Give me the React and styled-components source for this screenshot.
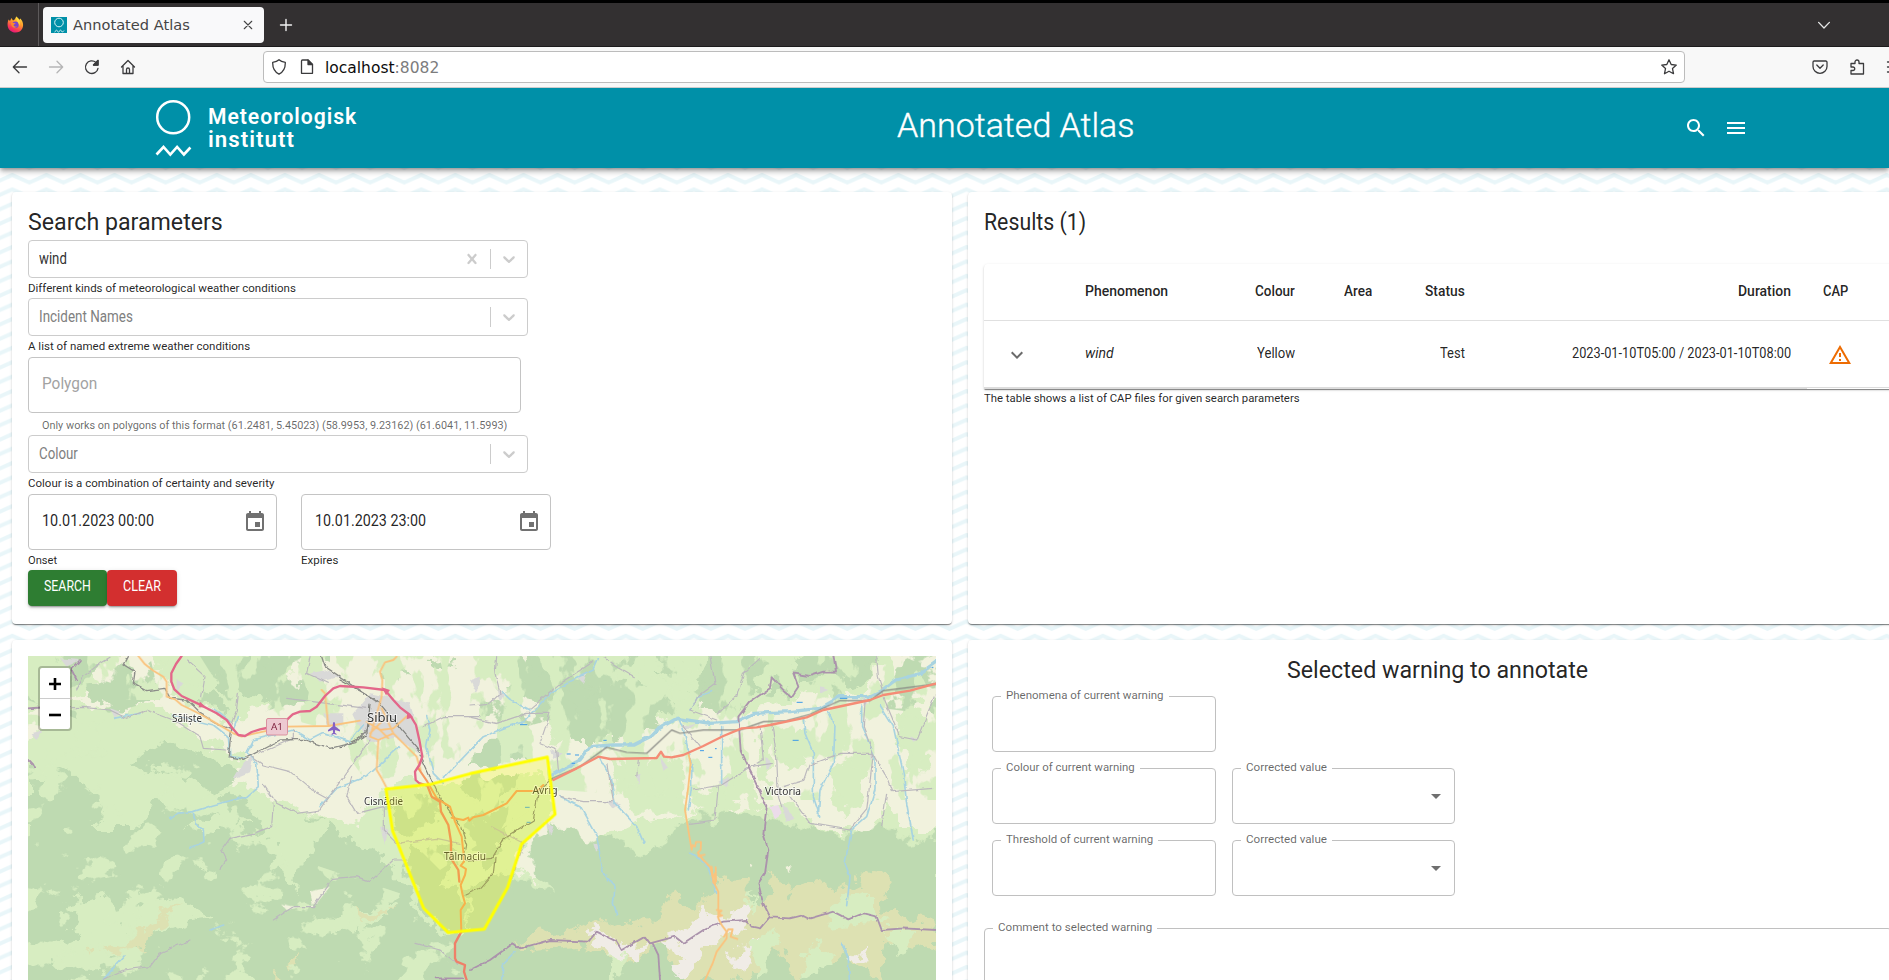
import React, { useLayoutEffect, useRef, useState } from "react";
import styled, { createGlobalStyle, css } from "styled-components";

const GlobalStyle = createGlobalStyle`
  * { box-sizing: border-box; }
  html, body { margin: 0; padding: 0; overflow: hidden; background: #fff; }
  body { font-family: Roboto, "Liberation Sans", sans-serif; color: rgba(0, 0, 0, 0.87); }
`;

/* ---------- text set to a fixed measure ---------- */
const Measure = styled.span`
  display: inline-block;
  flex: none;
  width: ${(p) => p.$w}px;
  text-align: left;
  white-space: nowrap;
`;
const Glyphs = styled.span`
  display: inline-block;
  transform-origin: 0 50%;
  white-space: pre;
`;
function Fit({ w, children }) {
  const ref = useRef(null);
  const [scale, setScale] = useState(1);
  useLayoutEffect(() => {
    setScale(w / ref.current.offsetWidth);
  }, [w]);
  return (
    <Measure $w={w}>
      <Glyphs ref={ref} style={{ transform: `scaleX(${scale})` }}>{children}</Glyphs>
    </Measure>
  );
}

/* ---------- browser window ---------- */
const Window = styled.div`
  width: 1889px;
  height: 980px;
  overflow: hidden;
  display: flex;
  flex-direction: column;
`;
const TabStrip = styled.div`
  height: 47px;
  flex: none;
  border-top: 3px solid #000;
  border-bottom: 1px solid #1c1b1c;
  background: #333031;
  display: flex;
  align-items: center;
`;
const PinnedTab = styled.div`
  width: 39px;
  height: 43px;
  padding-left: 7px;
  border-right: 1px solid #5d5a5b;
  display: flex;
  align-items: center;
`;
const Tab = styled.div`
  width: 221px;
  height: 36px;
  margin-left: 4px;
  padding: 0 10px 0 8px;
  border-radius: 4px;
  background: #f9f9fa;
  display: flex;
  align-items: center;
  font: 14.6px "DejaVu Sans", sans-serif;
  color: #454545;
  gap: 6px;
`;
const Grow = styled.div`
  flex: 1;
`;
const NewTab = styled.div`
  margin-left: 14px;
  display: flex;
`;
const TabsMenu = styled.div`
  width: 71px;
  display: flex;
`;
const NavBar = styled.div`
  height: 41px;
  flex: none;
  background: #f8f8f8;
  border-bottom: 1px solid #ccc;
  display: flex;
  align-items: center;
`;
const NavButtons = styled.div`
  width: 263px;
  flex: none;
  padding-left: 12px;
  display: flex;
  gap: 20px;
`;
const UrlBar = styled.div`
  width: 1422px;
  height: 32px;
  flex: none;
  border: 1px solid #bcbcbc;
  border-radius: 4px;
  background: #fff;
  display: flex;
  align-items: center;
  padding: 0 7px;
  gap: 12px;
  font: 15.5px "DejaVu Sans", sans-serif;
  color: #0c0c0d;
`;
const Address = styled.div`
  display: flex;
  margin-left: -2px;
  padding-top: 1px;
`;
const Port = styled.span`
  color: #7c7c7d;
`;
const NavTools = styled.div`
  margin-left: 127px;
  display: flex;
  gap: 21px;
  flex: none;
`;

/* ---------- page ---------- */
const Page = styled.div`
  position: relative;
  isolation: isolate;
  flex: 1;
  min-height: 0;
  overflow: hidden;
`;
const Waves = styled.svg`
  position: absolute;
  inset: 0;
  z-index: -1;
`;
const Header = styled.header`
  position: relative;
  z-index: 2;
  height: 80px;
  background: #0090a8;
  color: #fff;
  padding-left: 155px;
  box-shadow: 0 2px 4px -1px rgba(0, 0, 0, 0.3), 0 4px 5px rgba(0, 0, 0, 0.16), 0 1px 10px rgba(0, 0, 0, 0.12);
  display: flex;
`;
const Brand = styled.div`
  width: 742px;
  display: flex;
  gap: 16px;
`;
const BrandName = styled.div`
  padding-top: 18px;
  font-size: 22px;
  font-weight: 600;
  line-height: 22.8px;
  letter-spacing: 1px;
  display: flex;
  flex-direction: column;
`;
const AppTitle = styled.h1`
  margin: 0;
  width: 787px;
  padding-top: 15.5px;
  font-size: 34px;
  line-height: 42px;
  font-weight: 300;
  -webkit-text-stroke: 0.35px #fff;
`;
const HeaderTools = styled.div`
  padding-top: 28px;
  display: flex;
  gap: 16px;
`;
const Panels = styled.main`
  display: grid;
  grid-template-columns: 940px 940px;
  grid-template-rows: 432px 520px;
  gap: 16px;
  padding: 24px 12px;
  width: 1920px;
`;
const Panel = styled.section`
  background: #fff;
  border-radius: 4px;
  padding: 16px;
  box-shadow: 0 2px 1px -1px rgba(0, 0, 0, 0.3), 0 1px 1px rgba(0, 0, 0, 0.2), 0 1px 3px rgba(0, 0, 0, 0.14);
`;
const Heading = styled.h2`
  margin: 0;
  font-size: 24px;
  font-weight: 400;
  line-height: 28px;
  height: 32px;
  ${(p) => p.$center && css`text-align: center; padding-right: 2px; height: 40px;`}
`;
const Hint = styled.div`
  height: ${(p) => p.$h || 20}px;
  line-height: ${(p) => p.$line || 20}px;
  font-size: 11.5px;
  padding-left: ${(p) => p.$indent || 0}px;
  color: ${(p) => (p.$muted ? "rgba(0,0,0,0.6)" : "rgba(0,0,0,0.87)")};
`;
const Select = styled.div`
  width: 500px;
  height: 38px;
  border: 1px solid #ccc;
  border-radius: 4px;
  padding: 0 8px 2px 10px;
  font-size: 16px;
  color: ${(p) => (p.$empty ? "#808080" : "#333")};
  display: flex;
  align-items: center;
`;
const SelectTools = styled.div`
  margin-left: auto;
  padding-top: 2px;
  display: flex;
  align-items: center;
`;
const Separator = styled.i`
  width: 1px;
  height: 20px;
  background: #ccc;
  margin: 0 8px 0 8px;
`;
const Input = styled.div`
  width: ${(p) => p.$w}px;
  height: 56px;
  border: 1px solid #c4c4c4;
  border-radius: 4px;
  padding: 0 9px 4px 13px;
  font-size: 16.5px;
  color: ${(p) => (p.$empty ? "#a2a2a2" : "rgba(0,0,0,0.87)")};
  display: flex;
  align-items: center;
  justify-content: space-between;
`;
const IconDrop = styled.span`
  display: flex;
  padding-top: ${(p) => p.$top ?? 4}px;
`;
const Dates = styled.div`
  display: flex;
  gap: 24px;
`;
const Buttons = styled.div`
  display: flex;
`;
const Button = styled.button`
  border: 0;
  height: 36px;
  width: ${(p) => p.$w}px;
  padding: 0 0 5px;
  border-radius: 4px;
  background: ${(p) => p.$bg};
  color: #fff;
  font: 400 15.5px Roboto, sans-serif;
  box-shadow: 0 3px 1px -2px rgba(0, 0, 0, 0.2), 0 2px 2px rgba(0, 0, 0, 0.14), 0 1px 5px rgba(0, 0, 0, 0.12);
`;

/* ---------- results table ---------- */
const TableCard = styled.div`
  margin-top: 24px;
  width: 924px;
  height: 125px;
  border-radius: 4px 4px 0 0;
  box-shadow: 0 2px 1px -1px rgba(0, 0, 0, 0.3), 0 1px 1px rgba(0, 0, 0, 0.2), 0 1px 3px rgba(0, 0, 0, 0.14);
`;
const Row = styled.div`
  display: grid;
  grid-template-columns: 101px 84.5px 125px 77px 93px 326px 66px;
  align-items: center;
  height: ${(p) => (p.$head ? 57 : 67)}px;
  padding-bottom: ${(p) => (p.$head ? 1 : 3)}px;
  border-bottom: ${(p) => (p.$head ? "1px solid #e0e0e0" : "0")};
  font-size: 14.5px;
  font-weight: ${(p) => (p.$head ? 500 : 400)};
`;
const RowEnd = styled.div`
  height: 2px;
  margin-top: -1px;
  border-top: 1px solid #dcdcdc;
`;
const RowEndFill = styled.div`
  height: 1px;
  width: 823px;
  background: #dcdcdc;
`;
const Cell = styled.div`
  text-align: ${(p) => (p.$left ? "left" : "right")};
  padding-left: ${(p) => p.$pad || 0}px;
  font-style: ${(p) => (p.$italic ? "italic" : "normal")};
`;

/* ---------- annotation form ---------- */
const Form = styled.div`
  display: grid;
  grid-template-columns: 224px 223px;
  gap: 16px;
  padding-left: 8px;
`;
const Outlined = styled.div`
  position: relative;
  height: ${(p) => p.$h || 56}px;
  margin-top: ${(p) => p.$top || 0}px;
  grid-column: ${(p) => p.$col || "auto"};
  border: 1px solid #c0c0c0;
  border-radius: 4px;
  display: flex;
  align-items: center;
  justify-content: flex-end;
  padding-right: 6px;
`;
const Label = styled.label`
  position: absolute;
  left: 8px;
  top: -12px;
  padding: 0 5px;
  background: #fff;
  font-size: 11.5px;
  line-height: 20px;
  color: rgba(0, 0, 0, 0.6);
`;

/* ---------- map ---------- */
const MapFrame = styled.div`
  position: relative;
  width: 908px;
  height: 324px;
  overflow: hidden;
  background: #d8eec3;
`;
const ZoomControl = styled.div`
  position: absolute;
  left: 10px;
  top: 10px;
  width: 34px;
  border: 2px solid rgba(0, 0, 0, 0.22);
  border-radius: 4px;
  background: #fff;
  background-clip: padding-box;
`;
const ZoomButton = styled.div`
  height: ${(p) => (p.$first ? 31 : 30)}px;
  border-bottom: ${(p) => (p.$first ? "1px solid #ccc" : "0")};
  display: flex;
  align-items: center;
  justify-content: center;
  padding-top: 2px;
`;

/* ---------- icons ---------- */
const Chevron = () => (
  <svg width="20" height="20" viewBox="0 0 20 20" fill="#ccc">
    <path d="M4.516 7.548c0.436-0.446 1.043-0.481 1.576 0l3.908 3.747 3.908-3.747c0.533-0.481 1.141-0.446 1.574 0 0.436 0.445 0.408 1.197 0 1.615-0.406 0.418-4.695 4.502-4.695 4.502-0.217 0.223-0.502 0.335-0.787 0.335s-0.57-0.112-0.789-0.335c0 0-4.287-4.084-4.695-4.502s-0.436-1.17 0-1.615z" />
  </svg>
);
const Cross = () => (
  <svg width="20" height="20" viewBox="0 0 20 20" fill="#ccc">
    <path d="M14.348 14.849c-0.469 0.469-1.229 0.469-1.697 0l-2.651-3.030-2.651 3.029c-0.469 0.469-1.229 0.469-1.697 0-0.469-0.469-0.469-1.229 0-1.697l2.758-3.15-2.759-3.152c-0.469-0.469-0.469-1.228 0-1.697s1.228-0.469 1.697 0l2.652 3.031 2.651-3.031c0.469-0.469 1.228-0.469 1.697 0s0.469 1.229 0 1.697l-2.758 3.152 2.758 3.15c0.469 0.469 0.469 1.229 0 1.698z" />
  </svg>
);
const Mui = ({ d, fill = "currentColor" }) => (
  <svg width="24" height="24" viewBox="0 0 24 24" fill={fill}><path d={d} /></svg>
);
const CALENDAR = "M17 12h-5v5h5v-5zM16 1v2H8V1H6v2H5c-1.11 0-1.99.9-1.99 2L3 19c0 1.1.89 2 2 2h14c1.1 0 2-.9 2-2V5c0-1.1-.9-2-2-2h-1V1h-2zm3 18H5V8h14v11z";
const SEARCH = "M15.5 14h-.79l-.28-.27C15.41 12.59 16 11.11 16 9.5 16 5.91 13.09 3 9.5 3S3 5.91 3 9.5 5.91 16 9.5 16c1.61 0 3.09-.59 4.23-1.57l.27.28v.79l5 4.99L20.49 19l-4.99-5zm-6 0C7.01 14 5 11.99 5 9.5S7.01 5 9.5 5 14 7.01 14 9.5 11.99 14 9.5 14z";
const MENU = "M3 18h18v-2H3v2zm0-5h18v-2H3v2zm0-7v2h18V6H3z";
const WARNING = "M12 5.99L19.53 19H4.47L12 5.99M12 2L1 21h22L12 2zm1 14h-2v2h2v-2zm0-6h-2v4h2v-4z";
const ARROW_DOWN = "M7.41 8.59 12 13.17l4.59-4.58L18 10l-6 6-6-6 1.41-1.41z";
const DROP = "M7 10l5 5 5-5z";

const Line = ({ d, size = 16, color = "#3b3b3d", width = 1.3, children }) => (
  <svg width={size} height={size} viewBox="0 0 16 16" fill="none" stroke={color} strokeWidth={width} strokeLinecap="round" strokeLinejoin="round">
    <path d={d} />{children}
  </svg>
);
const Firefox = () => (
  <svg width="17" height="17" viewBox="0 0 17 17">
    <defs>
      <linearGradient id="fx" x1=".8" y1="0" x2=".3" y2="1">
        <stop offset="0" stopColor="#ffe141" /><stop offset=".4" stopColor="#ff9a2b" />
        <stop offset=".75" stopColor="#fb3c55" /><stop offset="1" stopColor="#e2127f" />
      </linearGradient>
    </defs>
    <path d="M1.600 3.500 3 5 4.400 2 6 4.400C7.500 4 8.300 3 9.200.6c1 1.500 2 2.200 3.300 3.200L13.400 2.600C16 5.500 17 9.500 15.300 12.600 13.700 15.600 11.200 16.600 8.500 16.600 4.300 16.600.8 13.600.6 9.300.5 7 .8 5.200 1.600 3.500z" fill="url(#fx)" />
    <circle cx="8.500" cy="8.800" r="3.200" fill="#7a45cf" />
    <path d="M3.800 7c2-.7 3.200.3 5 .1-.3 1-1.700 1.200-2.300 1.900.5 1.600 2 2 3.600 1.300-1.600 2.300-5.600 2-6.300-3.300z" fill="#ff8a2b" />
    <path d="M9.200.6c3.600 2.400 4.600 6 3 9.400C12.500 6.500 8.600 5.500 9.200.6z" fill="#ffd83c" />
  </svg>
);
const Favicon = () => (
  <svg width="16" height="16" viewBox="0 0 16 16">
    <rect width="16" height="16" fill="#0090a8" />
    <g fill="none" stroke="#d8f2f6" strokeWidth="1"><circle cx="8" cy="5.500" r="4.300" /><path d="M3.500 15l2-1.800 2 1.800 2-1.800 2 1.800 1.500-1.500" /></g>
  </svg>
);
const Logo = () => (
  <svg width="37" height="80" viewBox="155 88 37 80" fill="none" stroke="#fff">
    <circle cx="173.200" cy="117.200" r="16" strokeWidth="2.500" />
    <path d="M156.500 154.500l7-7.500 6.800 7.500 6.800-7.500 6.800 7.500 6.500-7" strokeWidth="2.600" />
  </svg>
);

/* ---------- terrain map drawing ---------- */
const A = "translate(0 630) scale(.33333)";
const B = "translate(470 630) scale(.33333)";
const C = "translate(340 655) scale(.33333)";
const Zone = ({ t, fill, d }) => <g transform={t}><path d={d} fill={fill} /></g>;
const CREAM = "#f1f2dd";
const WOOD = "#bedab1";
const MEADOW = "#d7edc1";
const ROCK = "#dde1b2";
const TOWN = "#d9d9d8";
const BARE = "#f0ece6";

const Terrain = () => (
  <svg width="908" height="324" viewBox="28 656 908 324" display="block">
    <defs>
      <filter id="rough" x="-5%" y="-5%" width="110%" height="110%" colorInterpolationFilters="sRGB">
        <feTurbulence type="fractalNoise" baseFrequency=".06" numOctaves="4" seed="4" result="n" />
        <feDisplacementMap in="SourceGraphic" in2="n" scale="27" xChannelSelector="R" yChannelSelector="G" />
      </filter>
      <filter id="wobble" x="-5%" y="-5%" width="110%" height="110%" colorInterpolationFilters="sRGB">
        <feTurbulence type="fractalNoise" baseFrequency=".1" numOctaves="3" seed="9" result="n" />
        <feDisplacementMap in="SourceGraphic" in2="n" scale="4" xChannelSelector="R" yChannelSelector="G" />
      </filter>
      <filter id="meadows" x="0" y="0" width="100%" height="100%" colorInterpolationFilters="sRGB">
        <feTurbulence type="fractalNoise" baseFrequency=".028 .034" numOctaves="5" seed="12" />
        <feColorMatrix values="0 0 0 0 .843  0 0 0 0 .929  0 0 0 0 .757  28 0 0 0 -16.600" result="m" />
        <feComposite in="m" in2="SourceAlpha" operator="in" />
      </filter>
      <filter id="woods" x="0" y="0" width="100%" height="100%" colorInterpolationFilters="sRGB">
        <feTurbulence type="fractalNoise" baseFrequency=".03" numOctaves="5" seed="21" />
        <feColorMatrix values="0 0 0 0 .745  0 0 0 0 .855  0 0 0 0 .694  28 0 0 0 -14.400" result="m" />
        <feComposite in="m" in2="SourceAlpha" operator="in" />
      </filter>
      <filter id="fields" x="0" y="0" width="100%" height="100%" colorInterpolationFilters="sRGB">
        <feTurbulence type="fractalNoise" baseFrequency=".04 .025" numOctaves="4" seed="33" />
        <feColorMatrix values="0 0 0 0 .843  0 0 0 0 .929  0 0 0 0 .757  24 0 0 0 -12.600" result="m" />
        <feComposite in="m" in2="SourceAlpha" operator="in" />
      </filter>
    </defs>

    <rect x="28" y="656" width="908" height="324" fill={MEADOW} />

    <g filter="url(#rough)">
      <Zone t={A} fill={CREAM} d="M240 60L420 60 500 130 520 200 660 260 700 280 860 190 870 90 960 60 1500 60 1500 440 1300 470 1220 440 1150 480 1070 590 960 560 830 510 760 470 690 470 740 400 600 320 480 230 330 240 200 220 84 340 84 260 190 210 300 160Z" />
      <Zone t={B} fill={CREAM} d="M0 60L400 60 320 160 230 240 250 340 340 300 440 330 600 260 700 200 800 250 1000 200 1180 190 1260 60 1420 60 1420 600 1300 600 1260 520 1200 610 1140 600 1060 600 980 540 860 520 640 560 500 580 420 600 380 660 300 640 200 760 130 720 160 640 250 550 230 430 60 430 0 370Z" />
      <Zone t={A} fill={WOOD} d="M84 410L190 370 280 300 430 310 560 360 690 400 720 440 660 490 740 500 790 600 700 650 850 640 940 560 1080 650 1160 690 1270 860 1340 920 1500 900 1500 1100 60 1100 60 640 84 600Z" />
      <Zone t={A} fill={WOOD} d="M260 170L420 150 480 200 420 230 300 220ZM640 80L840 80 860 160 960 150 940 240 790 210 660 170ZM590 200L660 180 690 240 620 230ZM1170 90L1240 120 1200 150 1150 130ZM1290 80L1360 90 1340 130 1290 110Z" />
      <Zone t={B} fill={WOOD} d="M170 60L370 60 360 130 490 150 620 220 540 290 440 330 330 330 250 290 250 220 170 210 100 180ZM0 380L130 290 190 330 180 380 0 420ZM560 100L640 90 620 150ZM740 60L820 60 870 160 800 240 740 240 660 200 700 120ZM1090 60L1220 60 1210 140 1140 170 1080 130 980 160 960 200 880 190 900 140Z" />
      <Zone t={B} fill={WOOD} d="M-20 900L50 870 130 740 250 800 170 650 260 570 360 650 420 620 520 680 620 600 700 560 760 530 860 550 940 590 1060 600 1150 610 1240 580 1320 640 1420 600 1420 1100 -20 1100Z" />
      <Zone t={B} fill={MEADOW} d="M420 400L560 400 640 380 640 560 560 540 500 560 450 500ZM670 480L750 470 790 420 850 430 880 530 800 500 740 570 670 540ZM860 330L900 300 910 480 870 440ZM1100 380L1180 390 1170 520 1120 560 1080 520ZM1290 200L1350 200 1380 420 1320 420 1280 300ZM950 300L1000 300 1010 400 950 440Z" />
      <Zone t={C} fill={WOOD} d="M150 450L230 400 300 440 290 490 200 540 160 530ZM370 380L540 350 520 410 440 450 360 400ZM380 500L490 440 520 490 480 590 430 640 390 580ZM210 580L330 560 340 620 300 680 360 700 380 830 320 830 240 740 190 620ZM440 650L520 640 500 720 430 820 380 800 380 700Z" />
      <Zone t={A} fill={MEADOW} d="M110 380L260 280 480 270 520 310 380 400 600 460 680 500 590 540 450 520 420 600 270 600 330 540 200 420 120 450ZM200 820L330 800 370 900 400 770 420 830 550 800 640 860 500 880 400 960 300 1010 180 1020 110 960 240 900ZM560 590L640 550 760 580 700 600ZM840 560L990 580 960 640 900 700 890 790 830 700ZM940 910L1060 840 1200 820 1120 880 1000 910Z" />
      <Zone t={A} fill={ROCK} d="M250 965L340 950 430 900 470 860 560 820 480 880 430 960 340 980ZM1050 830L1110 850 1200 830 1100 870ZM865 990L900 965 880 1010ZM820 1010L850 1060 820 1060Z" />
      <Zone t={B} fill={ROCK} d="M130 940L180 910 330 900 380 870 440 890 560 870 600 790 660 850 740 760 830 730 830 800 880 830 910 730 960 790 1050 740 1110 790 1200 730 1270 740 1230 840 1400 880 1400 960 1240 920 1230 1060 1120 960 980 1060 930 950 820 1060 640 1060 580 930 480 1000 340 950 200 960Z" />
      <Zone t={B} fill={MEADOW} d="M1070 830L1200 770 1200 830 1260 880 1080 890ZM840 960L900 900 930 940 870 1040ZM1000 980L1060 920 1080 1000 1010 1050ZM400 960L470 970 460 1040 420 1050ZM1240 900L1340 900 1300 980ZM820 830L860 790 850 860Z" />
      <Zone t={B} fill={BARE} d="M350 930L380 880 460 960 530 930 500 990 440 980ZM560 930L680 890 690 830 740 850 780 860 820 820 840 890 700 950 640 1040 590 1040 640 970ZM790 960L850 950 830 1020 790 1030ZM1130 1000L1200 940 1190 980Z" />
    </g>

    <path d="M28 690L160 745 260 800 300 860 420 900 480 980 28 980Z" filter="url(#meadows)" />
    <path d="M480 656H936V715L740 690 620 700 480 740Z" filter="url(#woods)" />
    <path d="M200 656H330V690L240 720ZM28 656H150L160 700 80 720 28 700Z" filter="url(#woods)" />
    <path d="M28 656H936V800L700 800 560 790 440 870 400 830 330 730 220 700 28 700Z" filter="url(#fields)" />

    <g filter="url(#wobble)">
      <Zone t={A} fill={TOWN} d="M1060 250L1110 190 1160 200 1230 220 1250 290 1260 370 1180 320 1110 340 1080 290ZM930 130L980 120 1020 140 960 155ZM970 250L1030 250 1030 290 980 285ZM730 400L760 375 750 430 700 450ZM1140 590L1165 600 1155 645ZM95 310L130 300 110 330ZM330 235L360 245 345 265ZM530 150L550 160 530 185ZM180 85L240 90 200 110Z" />
      <Zone t={B} fill={TOWN} d="M80 180L105 190 90 215ZM240 360L275 370 250 390ZM320 140L350 130 340 160ZM500 430L515 430 505 465ZM570 380L595 415 580 425ZM640 290L680 280 650 300ZM745 455L780 440 770 475ZM885 380L910 400 890 420ZM935 520L975 560 950 580ZM1205 360L1220 380 1200 390ZM1180 200L1195 215 1180 225ZM1320 320L1350 325 1330 335ZM410 510L450 520 430 535ZM370 640L390 650 375 665ZM230 570L250 590 240 620ZM0 150L30 140 20 190ZM1050 170L1075 180 1050 190Z" />
      <Zone t={A} fill={CREAM} d="M840 820L880 830 940 830 930 785 990 770 950 820 860 840Z" />
      <Zone t={B} fill={CREAM} d="M950 710L965 705 955 730ZM840 700L850 705 845 715Z" />
      <Zone t={B} fill="#ecdcea" d="M900 530L925 525 935 550 915 565Z" />
    </g>

    <g fill="none" strokeLinejoin="round" strokeLinecap="round" filter="url(#wobble)">
      <g transform={A} stroke="#a8d3e0" strokeWidth="5">
        <path d="M510 565L530 550 580 545 640 525 740 500 775 470 770 400 750 375 740 370 760 330 800 320 880 300 930 330 970 310 1050 335 1090 285M580 545L585 580 610 600 612 635 570 655M735 385L690 380 685 320 640 285 520 255M1280 260L1290 300 1280 350 1300 430 1330 460M1440 330L1330 445M960 530L1010 475 1100 440 1200 350M310 1048L375 975M630 900L668 885M340 265L420 250M700 300L712 260M640 235L690 275" />
      </g>
      <g transform={B} stroke="#a8d3e0" strokeWidth="5">
        <path d="M385 85L370 120 290 160 240 190 160 275 100 295 40 320 0 360M95 185L120 208 180 240M625 262L640 300 665 400 665 470 655 540M1000 265L1005 310 1030 370 1030 500 1050 560M1075 245L1095 290 1090 400 1050 480 1045 555M1175 225L1175 290 1215 380 1215 480 1190 560 1145 600 1125 700 1140 740 1130 830M1230 225L1270 290 1300 430 1310 520 1330 630M390 385L420 440 435 520 500 590 522 640M270 500L330 530 380 620 400 730 435 770 430 820 440 855M660 670L710 700 740 790M755 290L755 460M660 240L680 200 725 185M1115 940L1135 985 1138 1050M135 965L100 1000 95 1050" />
        <path d="M250 435L330 390 360 350 430 345 490 345 540 320 560 300 620 265 720 280 800 275 850 250 960 245 1050 235 1110 200 1200 200 1240 180 1280 150 1350 130 1400 95" strokeWidth="10" />
      </g>
      <g transform={A} stroke="#bbb8bd" strokeWidth="3.500">
        <path d="M85 235L250 232 330 240 380 265 440 240 520 270 600 320 610 355 680 360M330 82L300 100 250 140 230 180M560 90L615 140 605 200M715 190L710 240 690 290M755 380L790 405 870 425 930 475 985 505M790 460L830 520 890 550 960 540 1080 370 1110 330M820 520L815 590 760 610 690 625 665 660 680 690 660 718M1055 440L1040 500 1070 550 1150 530M1150 530L1150 600 1190 640 1310 625 1380 640M820 870L880 830 940 830 1000 745 1070 740 1110 755 1180 690 1220 690M310 1048L370 1020 450 1010 480 970 570 930M930 80L920 130 985 160M860 205L1100 235M1270 290L1330 260 1440 260M1245 940L1320 960 1370 1000M880 300L880 325 780 370" />
      </g>
      <g transform={B} stroke="#bbb8bd" strokeWidth="3.500">
        <path d="M80 80L75 130 90 190 60 220 0 225M0 262L80 280 170 250 240 250 210 340 260 360 265 420M370 95L270 160 180 235M400 80L430 105 490 140M720 80L735 160 680 200 660 240 740 270M870 85L820 130 800 200 740 250M640 290L690 350M270 500L340 515 430 515 410 400M505 390L500 440M670 480L755 465 840 410 910 400M660 580L735 570 745 470M840 410L880 390 870 285M905 280L920 380 925 500 935 530M940 470L1005 450 1020 405 1110 370 1210 370 1245 430 1265 485 1390 475M960 500L1020 580 1140 600 1190 540 1210 370 1180 290 1185 215M1235 590L1250 490M1240 200L1290 320 1340 330 1395 195M1220 80L1225 140 1240 190M65 590L160 640 130 720" />
      </g>
      <g transform={C} stroke="#7f807c" strokeWidth="3.500">
        <path d="M240 300L300 430 360 510 380 570 370 620 455 610 490 550 580 495 595 410 640 370M375 720L420 700 460 655 465 610M0 278L80 240 90 150M0 75L110 135 240 290" />
      </g>
      <g transform={A} stroke="#8c8d89" strokeWidth="4">
        <path d="M385 80L372 105 405 125 400 160 440 182 495 175 510 205 560 210 600 250 650 280 695 295 685 380 730 388 840 330 910 328 990 355 1070 335 1100 300M965 80L975 110 1050 160 1130 215" />
      </g>
      <g stroke="#ab93ac" strokeWidth="5.500">
        <path transform={B} d="M1090 78L1098 125 1060 125 1020 138 970 130 985 170 965 200 940 180 905 142 900 175 840 215 805 260 812 360 850 440 890 530 880 610 895 660 885 730 865 760 880 820 900 860 870 895 845 890 830 870 760 875 730 885 700 900 640 940 615 920 540 940 525 920 455 960 440 935 380 905 355 935 240 930 150 955 130 940 60 990 0 1020M900 862L960 865 1000 855 1020 865 1090 845 1135 868 1180 850 1220 860 1235 900 1300 895 1400 900M548 940L565 975 570 1050" />
        <path transform={A} d="M84 235L125 232M240 90L215 120 230 150M84 390L103 410" />
        <path transform={C} d="M290 970L370 970" />
      </g>
    </g>

    <g fill="none" strokeLinejoin="round" strokeLinecap="round">
      <path transform={B} stroke="#858682" strokeWidth="3.500" d="M235 450L330 410 410 352 470 367 530 370 605 300 630 310 700 300 810 300 880 275 950 272 1020 253 1110 212 1200 212 1240 182 1400 162" />
      <g stroke="#fac37e" strokeWidth="5.500">
        <path transform={A} d="M415 78L435 103 460 122 490 140 500 155 500 200 525 208 545 225 600 252 640 275 700 310 725 320 765 310 860 290 985 288 1080 272M985 288L980 240 975 190 965 180M1190 80L1180 90 1155 97 1140 125 1147 150 1145 200 1125 270 1110 320 1135 330 1130 420 1145 445 1158 470M1145 235L1180 310 1250 380 1262 420M1100 275L1140 300 1180 295 1225 255M1135 330L1180 310M1110 310L1150 270M1130 290L1165 325" />
        <path transform={B} d="M655 370L662 400 655 470 645 540 665 660 668 645 675 650 678 636 693 636 692 660 683 668 700 690 722 712 728 745 735 730 735 765 745 785 745 865 755 885 770 905 770 925 740 965 728 1000 705 1050M685 678L704 674M725 710L730 760 738 755 737 712M740 840L755 842 745 850 757 857 743 860M762 920L775 898 788 898 782 920 802 927" />
      </g>
      <path transform={C} stroke="#f59a62" strokeWidth="6" d="M235 340L262 380 290 430 330 455 345 500 365 545 370 590 372 620 362 632 378 642 375 660 362 690 368 720 375 745 362 765 364 830M335 488L370 495 385 488 388 497 400 487 430 480 500 445 530 408 590 408 610 390" />
      <g stroke="#ee8069" strokeWidth="7">
        <path transform={C} d="M240 385L262 392 275 425 300 440 303 470 325 510 333 560 333 610 355 645 358 680M364 830L345 865 345 910 350 920 375 930 372 950 380 975" />
        <path transform={B} d="M250 450L320 415 385 380 420 387 560 384 573 365 582 380 605 382 640 375 700 348 760 318 815 295 860 292 900 285 1010 262 1060 240 1200 210 1240 195 1320 182 1400 160" stroke="#f58c76" />
      </g>
      <path transform={A} stroke="#e3678a" strokeWidth="7" d="M545 78L528 102 514 130 514 155 523 178 545 198 600 224 650 250 680 270 700 298 715 315 735 318 755 306 780 298 800 294M862 268L878 253 900 245 930 243 950 230 975 198 1000 175 1020 168 1090 172 1155 180 1180 210 1200 232 1230 255 1248 285 1258 330 1267 380 1258 405 1245 425 1247 450 1260 462" />
      <path transform={A} fill="#e3678a" d="M1145 172L1170 180 1158 196ZM1222 245L1240 262 1220 268ZM600 215L618 232 596 232Z" />
    </g>

    <path transform={B} d="M290 372h12M305 400h10M315 375h12M400 331h10M150 284h22M968 331h18M1110 205h22M980 217h18M690 362h12M715 382h12M735 356h5M165 532h14M170 577h12M1385 112h5" stroke="#3d9be8" strokeWidth="3" />

    <g fontFamily='"Noto Sans", "Open Sans", sans-serif' fill="#333" stroke="#fff" strokeOpacity=".65" strokeWidth="2" paintOrder="stroke" fontSize="10.500">
      <text x="172" y="722" textLength="30" lengthAdjust="spacingAndGlyphs">Săliște</text>
      <text x="367" y="721.500" fontSize="13.300" textLength="30" lengthAdjust="spacingAndGlyphs">Sibiu</text>
      <text x="364" y="804.500" textLength="39" lengthAdjust="spacingAndGlyphs">Cisnădie</text>
      <text x="444" y="859.500" textLength="42" lengthAdjust="spacingAndGlyphs">Tălmaciu</text>
      <text x="532.500" y="794" textLength="25" lengthAdjust="spacingAndGlyphs">Avrig</text>
      <text x="765" y="794.500" textLength="36" lengthAdjust="spacingAndGlyphs">Victoria</text>
    </g>
    <rect x="266.500" y="718.500" width="21" height="16.500" rx="1.500" fill="#edc9d1" stroke="#d9919f" />
    <text x="271" y="730.300" fontFamily='"Noto Sans", sans-serif' fontSize="9.500" fill="#7c1f3c" textLength="12" lengthAdjust="spacingAndGlyphs">A1</text>
    <path transform="translate(334 728.500)" d="M0-6.500C1-6.500 1.200-5 1.200-2.200L6 1.500V3L1.200 1.500.9 4.200 2.600 5.500V6.300L0 5.500-2.600 6.300V5.500L-.9 4.200-1.200 1.500-6 3V1.500L-1.200-2.200C-1.200-5-1-6.500 0-6.500z" fill="#8461c4" />

    <path transform={C} d="M138 402L275 387 390 356 622 306 645 478 545 567 503 697 433 822 325 833 251 760 158 528Z" fill="#ff0" fillOpacity=".23" stroke="#ff0" strokeWidth="9" strokeLinejoin="round" />
  </svg>
);

function Picker({ text, w, clearable, empty }) {
  return (
    <Select $empty={empty}>
      <Fit w={w}>{text}</Fit>
      <SelectTools>
        {clearable && <Cross />}
        <Separator />
        <Chevron />
      </SelectTools>
    </Select>
  );
}
function Field({ label, w, col, select, h, top }) {
  return (
    <Outlined $col={col} $h={h} $top={top}>
      <Label><Fit w={w}>{label}</Fit></Label>
      {select && <Mui d={DROP} fill="#6f6f6f" />}
    </Outlined>
  );
}

function BrowserChrome() {
  return (
    <>
      <TabStrip>
        <PinnedTab><Firefox /></PinnedTab>
        <Tab>
          <Favicon />
          <Fit w={117}>Annotated Atlas</Fit>
          <Grow />
          <Line size={12} d="M3 3l10 10M13 3L3 13" color="#444" width={1.5} />
        </Tab>
        <NewTab><Line d="M8 2.500v11M2.500 8h11" color="#f2f2f2" width={1.4} /></NewTab>
        <Grow />
        <TabsMenu><Line size={12} d="M.8 4.500L8 12l7.200-7.500" color="#e8e8e8" width={1.7} /></TabsMenu>
      </TabStrip>
      <NavBar>
        <NavButtons>
          <Line d="M14.500 8h-13M7 2.300L1.300 8 7 13.700" />
          <Line d="M1.500 8h13M9 2.300L14.700 8 9 13.700" color="#b5b5b6" />
          <Line d="M14 9.300A6.300 6.300 0 1 1 12 3.500M14 1.500V6H9.500z">
            <path d="M14 1.500V6H9.500z" fill="#3b3b3d" />
          </Line>
          <Line d="M1.500 8L8 1.500 14.500 8M3 7v7.500h10V7M6.500 14.500V10.500a1.500 1.500 0 0 1 3 0v4" />
        </NavButtons>
        <UrlBar>
          <Line d="M8 .8C9.500 2.300 11.500 3 14.300 3.300 14.500 9 12.500 13 8 15.200 3.500 13 1.500 9 1.700 3.300 4.500 3 6.500 2.300 8 .8z" />
          <Line d="M3.500 1h5.500l4.500 4.500V14.300H2.500V2a1 1 0 0 1 1-1z">
            <path d="M9 1v4.500h4.500z" fill="#3b3b3d" />
          </Line>
          <Address>
            <Fit w={114}>localhost<Port>:8082</Port></Fit>
          </Address>
          <Grow />
          <Line d="M8 .8l2.200 4.700 5.100.6-3.800 3.500 1 5.100L8 12.200l-4.500 2.500 1-5.100L.7 6.100l5.100-.6z" />
        </UrlBar>
        <NavTools>
          <Line d="M2.200 2h11.600a1.200 1.200 0 0 1 1.200 1.200V7.500a7 6.800 0 0 1-14 0V3.200A1.200 1.200 0 0 1 2.200 2zM4.800 6L8 9.200 11.200 6" />
          <Line d="M6 4.500V3a2 2 0 0 1 4 0v1.500h4.500V15H2V11.500h2a1.700 1.700 0 0 0 0-3.500H2V4.500z" />
          <Line d="M1.500 3h13M1.500 8h13M1.500 13h13" />
        </NavTools>
      </NavBar>
    </>
  );
}

function SearchPanel() {
  return (
    <Panel>
      <Heading><Fit w={195}>Search parameters</Fit></Heading>
      <Picker text="wind" w={28} clearable />
      <Hint><Fit w={268}>Different kinds of meteorological weather conditions</Fit></Hint>
      <Picker text="Incident Names" w={94} empty />
      <Hint $h={21} $line={21}><Fit w={222}>A list of named extreme weather conditions</Fit></Hint>
      <Input $w={493} $empty><Fit w={55}>Polygon</Fit></Input>
      <Hint $h={22} $line={25} $indent={14} $muted>
        <Fit w={465}>Only works on polygons of this format (61.2481, 5.45023) (58.9953, 9.23162) (61.6041, 11.5993)</Fit>
      </Hint>
      <Picker text="Colour" w={39} empty />
      <Hint $h={21} $line={21}><Fit w={246}>Colour is a combination of certainty and severity</Fit></Hint>
      <Dates>
        <div>
          <Input $w={249}><Fit w={112}>10.01.2023 00:00</Fit><IconDrop><Mui d={CALENDAR} fill="#717171" /></IconDrop></Input>
          <Hint><Fit w={29}>Onset</Fit></Hint>
        </div>
        <div>
          <Input $w={250}><Fit w={111}>10.01.2023 23:00</Fit><IconDrop><Mui d={CALENDAR} fill="#717171" /></IconDrop></Input>
          <Hint><Fit w={37}>Expires</Fit></Hint>
        </div>
      </Dates>
      <Buttons>
        <Button $w={79} $bg="#2e7d32"><Fit w={47}>SEARCH</Fit></Button>
        <Button $w={70} $bg="#d32f2f"><Fit w={38}>CLEAR</Fit></Button>
      </Buttons>
    </Panel>
  );
}

function ResultsPanel() {
  return (
    <Panel>
      <Heading><Fit w={102}>Results (1)</Fit></Heading>
      <TableCard>
        <Row $head>
          <Cell />
          <Cell $left><Fit w={83}>Phenomenon</Fit></Cell>
          <Cell><Fit w={40}>Colour</Fit></Cell>
          <Cell><Fit w={28}>Area</Fit></Cell>
          <Cell><Fit w={40}>Status</Fit></Cell>
          <Cell><Fit w={53}>Duration</Fit></Cell>
          <Cell $left $pad={32}><Fit w={25}>CAP</Fit></Cell>
        </Row>
        <Row>
          <Cell $left $pad={21}><IconDrop $top={3}><Mui d={ARROW_DOWN} fill="#6b6b6b" /></IconDrop></Cell>
          <Cell $left $italic><Fit w={29}>wind</Fit></Cell>
          <Cell><Fit w={38}>Yellow</Fit></Cell>
          <Cell />
          <Cell><Fit w={25}>Test</Fit></Cell>
          <Cell><Fit w={219}>2023-01-10T05:00 / 2023-01-10T08:00</Fit></Cell>
          <Cell $left $pad={37}><IconDrop $top={3}><Mui d={WARNING} fill="#ed6c02" /></IconDrop></Cell>
        </Row>
        <RowEnd><RowEndFill /></RowEnd>
      </TableCard>
      <Hint $line={18}><Fit w={316}>The table shows a list of CAP files for given search parameters</Fit></Hint>
    </Panel>
  );
}

export default function App() {
  return (
    <Window>
      <GlobalStyle />
      <BrowserChrome />
      <Page>
        <Waves width="1889" height="892">
          <defs>
            <pattern id="zig" width="34.080" height="14.400" patternUnits="userSpaceOnUse" patternTransform="translate(12.300 87)">
              <path d="M-17.040 7.500L0 0 17.040 7.500 34.080 0 51.120 7.500M-17.040-6.900L0-14.400 17.040-6.900 34.080-14.400M-17.040 21.900L0 14.400 17.040 21.900 34.080 14.400 51.120 21.900" fill="none" stroke="#e9f6f9" strokeWidth="4" />
            </pattern>
          </defs>
          <rect width="1889" height="892" fill="url(#zig)" />
        </Waves>
        <Header>
          <Brand>
            <Logo />
            <BrandName>
              <Fit w={149}>Meteorologisk</Fit>
              <Fit w={87}>institutt</Fit>
            </BrandName>
          </Brand>
          <AppTitle><Fit w={238}>Annotated Atlas</Fit></AppTitle>
          <HeaderTools><Mui d={SEARCH} /><Mui d={MENU} /></HeaderTools>
        </Header>
        <Panels>
          <SearchPanel />
          <ResultsPanel />
          <Panel>
            <MapFrame>
              <Terrain />
              <ZoomControl>
                <ZoomButton $first><svg width="14" height="14" stroke="#000" strokeWidth="2.600"><path d="M7 1v12M1 7h12" /></svg></ZoomButton>
                <ZoomButton><svg width="14" height="14" stroke="#000" strokeWidth="2.600"><path d="M1 7h12" /></svg></ZoomButton>
              </ZoomControl>
            </MapFrame>
          </Panel>
          <Panel>
            <Heading $center><Fit w={301}>Selected warning to annotate</Fit></Heading>
            <Form>
              <Field label="Phenomena of current warning" w={158} col="1" />
              <Field label="Colour of current warning" w={129} col="1" />
              <Field label="Corrected value" w={81} col="2" select />
              <Field label="Threshold of current warning" w={147} col="1" />
              <Field label="Corrected value" w={81} col="2" select />
            </Form>
            <Field label="Comment to selected warning" w={154} h={200} top={32} />
          </Panel>
        </Panels>
      </Page>
    </Window>
  );
}
